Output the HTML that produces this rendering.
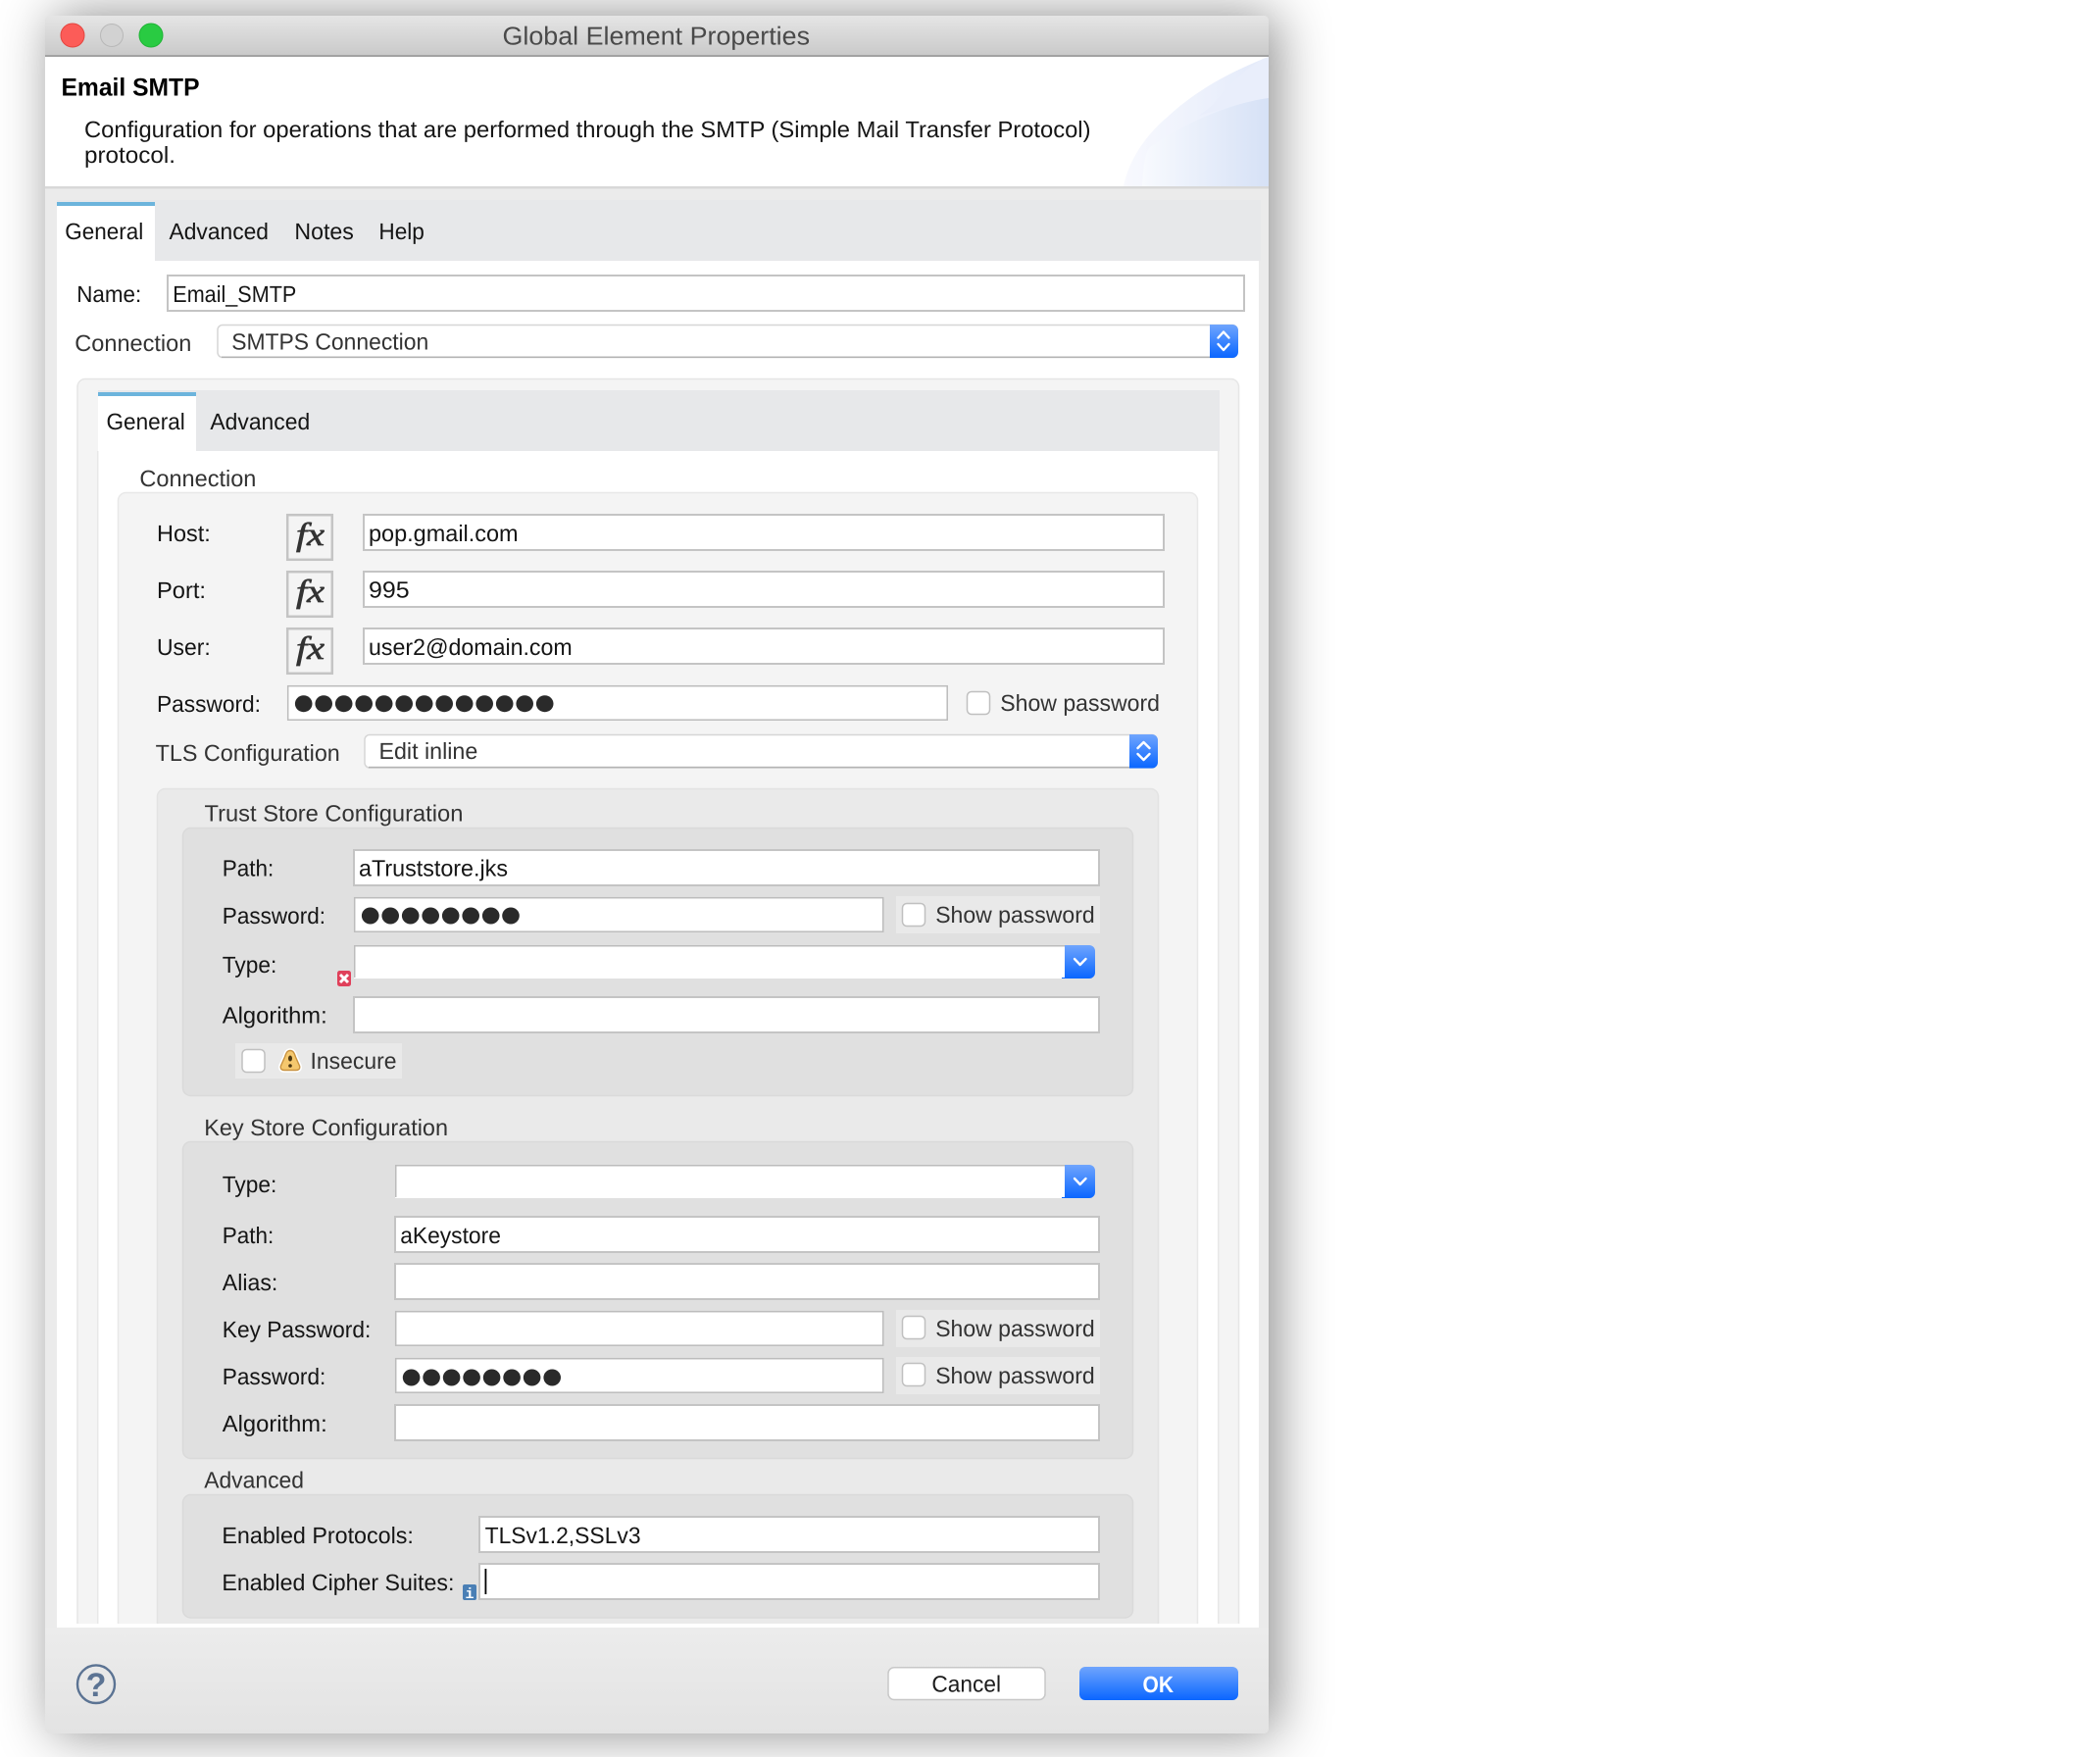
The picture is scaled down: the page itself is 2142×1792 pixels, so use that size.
<!DOCTYPE html>
<html><head><meta charset="utf-8"><title>Global Element Properties</title>
<style>
html,body{margin:0;padding:0;background:#fff;width:2142px;height:1792px;overflow:hidden}
#w{position:absolute;left:46px;top:16px;width:1248px;height:1752px;border-radius:5px;box-shadow:8px 0 54px rgba(0,0,0,.46);background:#ebebeb}
svg{position:absolute;left:0;top:0;filter:blur(.35px)}
text{font-family:"Liberation Sans",sans-serif;font-size:23.5px;fill:#151515;text-rendering:geometricPrecision}
.g{fill:#333}
.i{fill:#fff;stroke:#c4c4c4;stroke-width:2}
.t{fill:#fff;stroke:#bcbcbc;stroke-width:1.5}
.c{fill:#fff;stroke:#c0c0c0;stroke-width:1.5}
.fx{fill:none;stroke:#c4c4c4;stroke-width:2.5}
.ch{fill:none;stroke:#fff;stroke-width:2.4;stroke-linecap:round;stroke-linejoin:round}
.d{fill:#2a2a2a}
.fxt{font-family:"Liberation Serif",serif;font-style:italic;font-size:33px;fill:#333;stroke:#333;stroke-width:.7px}
</style></head><body>
<div id="w"></div>
<svg width="2142" height="1792" viewBox="0 0 2142 1792" xmlns="http://www.w3.org/2000/svg">
<defs>
<linearGradient id="tb" x1="0" y1="0" x2="0" y2="1"><stop offset="0" stop-color="#e5e5e5"/><stop offset="1" stop-color="#c9c9c9"/></linearGradient>
<linearGradient id="bt" x1="0" y1="0" x2="0" y2="1"><stop offset="0" stop-color="#6fa5fd"/><stop offset="1" stop-color="#0a66ff"/></linearGradient>
<linearGradient id="ft" x1="0" y1="0" x2="0" y2="1"><stop offset="0" stop-color="#ececec"/><stop offset="1" stop-color="#e3e3e3"/></linearGradient>
<linearGradient id="wm" x1="0" y1="0" x2="1" y2="0"><stop offset="0" stop-color="#f8f9fe"/><stop offset="1" stop-color="#e3eafa"/></linearGradient>
<linearGradient id="wm2" x1="0" y1="0" x2="1" y2="0"><stop offset="0" stop-color="#f8fafe"/><stop offset="1" stop-color="#d6e1f6"/></linearGradient>
</defs>

<!-- title bar -->
<path d="M46 57V21a5 5 0 0 1 5-5H1289a5 5 0 0 1 5 5V57Z" fill="url(#tb)"/>
<rect x="46" y="56" width="1248" height="2" fill="#a2a2a2"/>
<circle cx="74" cy="36" r="12" fill="#fc5c58" stroke="#e4453f" stroke-width="1"/>
<circle cx="114" cy="36" r="11.5" fill="#d2d2d2" stroke="#b8b8b8" stroke-width="1"/>
<circle cx="154" cy="36" r="12" fill="#29cb42" stroke="#20b436" stroke-width="1"/>
<text x="512.5" y="45.5" textLength="313.5" lengthAdjust="spacingAndGlyphs" style="font-size:26px;fill:#4a4a4a">Global Element Properties</text>

<!-- header -->
<rect x="46" y="58" width="1248" height="132" fill="#fff"/>
<path d="M1146 190C1152 160 1172 135 1190 120C1220 92 1255 73 1294 58V190Z" fill="url(#wm)"/>
<path d="M1237 107C1250 90 1268 72 1288 60L1294 58V100C1270 104 1250 110 1223 118Z" fill="#e9eefb"/>
<path d="M1165 190C1166 170 1168 155 1173 150C1205 128 1250 106 1294 100V190Z" fill="url(#wm2)"/>
<rect x="46" y="190" width="1248" height="2.5" fill="#d8d8d8"/>
<text x="62.5" y="97.5" textLength="141" lengthAdjust="spacingAndGlyphs" style="font-size:25.5px;font-weight:bold;fill:#000">Email SMTP</text>
<text x="86" y="140" textLength="1026.5" lengthAdjust="spacingAndGlyphs">Configuration for operations that are performed through the SMTP (Simple Mail Transfer Protocol)</text>
<text x="86" y="166" textLength="93" lengthAdjust="spacingAndGlyphs">protocol.</text>

<!-- outer tabs -->
<rect x="46" y="192.5" width="1248" height="1463" fill="#ebebeb"/>
<rect x="58" y="204" width="1228" height="62" fill="#e7e8ea"/>
<rect x="58" y="266" width="1226" height="1394" fill="#fff"/>
<rect x="58" y="206" width="100" height="60" fill="#fff"/>
<rect x="58" y="206" width="100" height="4" fill="#6cb4dc"/>
<text x="66.3" y="244" textLength="80" lengthAdjust="spacingAndGlyphs">General</text>
<text x="172.5" y="244" textLength="101.5" lengthAdjust="spacingAndGlyphs">Advanced</text>
<text x="300.4" y="244" textLength="60.5" lengthAdjust="spacingAndGlyphs">Notes</text>
<text x="386.4" y="244" textLength="46.5" lengthAdjust="spacingAndGlyphs">Help</text>

<text x="78.2" y="308" textLength="66" lengthAdjust="spacingAndGlyphs">Name:</text>
<rect class="i" x="171" y="281" width="1098" height="36"/>
<text x="176.3" y="308" textLength="126" lengthAdjust="spacingAndGlyphs">Email_SMTP</text>

<text class="g" x="76.3" y="358" textLength="119" lengthAdjust="spacingAndGlyphs">Connection</text>
<rect x="222" y="331.5" width="1040" height="33" rx="5" fill="#fff" stroke="#d6d6d6" stroke-width="1.5"/>
<rect x="226" y="363.5" width="1010" height="1.5" fill="#b4b4b4"/>
<path d="M1234 331H1257a6 6 0 0 1 6 6V359a6 6 0 0 1-6 6H1234Z" fill="url(#bt)"/>
<path class="ch" d="M1242.5 344.5L1248 338.5L1253.5 344.5M1242.5 351L1248 357L1253.5 351"/>
<text class="g" x="236.2" y="356.3" textLength="201" lengthAdjust="spacingAndGlyphs">SMTPS Connection</text>

<!-- nested panel -->
<rect x="79" y="386.5" width="1184.5" height="1290" rx="8" fill="#f4f4f4" stroke="#e6e6e6" stroke-width="1.5"/>
<rect x="100" y="398" width="1144" height="62" fill="#e7e8ea"/>
<rect x="100" y="460" width="1142" height="1200" fill="#fff"/>
<rect x="1242" y="460" width="1.5" height="1200" fill="#e8e8e8"/>
<rect x="99" y="460" width="1.5" height="1200" fill="#e8e8e8"/>
<rect x="100" y="400" width="100" height="60" fill="#fff"/>
<rect x="100" y="400" width="100" height="4" fill="#6cb4dc"/>
<text x="108.5" y="438" textLength="80.3" lengthAdjust="spacingAndGlyphs">General</text>
<text x="214.4" y="438" textLength="101.8" lengthAdjust="spacingAndGlyphs">Advanced</text>

<text class="g" x="142.4" y="496" textLength="119" lengthAdjust="spacingAndGlyphs">Connection</text>
<rect x="120.5" y="502.5" width="1101" height="1180" rx="8" fill="#f4f4f4" stroke="#e8e8e8" stroke-width="1.5"/>

<!-- host/port/user -->
<text x="160" y="552" textLength="54.8" lengthAdjust="spacingAndGlyphs">Host:</text>
<text x="160" y="610" textLength="50" lengthAdjust="spacingAndGlyphs">Port:</text>
<text x="160" y="668" textLength="54.8" lengthAdjust="spacingAndGlyphs">User:</text>
<rect class="fx" x="293.2" y="525.2" width="45.6" height="45.6"/>
<rect class="fx" x="293.2" y="583.2" width="45.6" height="45.6"/>
<rect class="fx" x="293.2" y="641.2" width="45.6" height="45.6"/>
<text class="fxt" x="302" y="556" textLength="29" lengthAdjust="spacingAndGlyphs">fx</text>
<text class="fxt" x="302" y="614" textLength="29" lengthAdjust="spacingAndGlyphs">fx</text>
<text class="fxt" x="302" y="672" textLength="29" lengthAdjust="spacingAndGlyphs">fx</text>
<rect class="i" x="371" y="525" width="816" height="36"/>
<rect class="i" x="371" y="583" width="816" height="36"/>
<rect class="i" x="371" y="641" width="816" height="36"/>
<text x="376" y="552" textLength="152.6" lengthAdjust="spacingAndGlyphs">pop.gmail.com</text>
<text x="376" y="609.5" textLength="41.6" lengthAdjust="spacingAndGlyphs">995</text>
<text x="376" y="668" textLength="207.7" lengthAdjust="spacingAndGlyphs">user2@domain.com</text>

<!-- password -->
<text x="160" y="726" textLength="106" lengthAdjust="spacingAndGlyphs">Password:</text>
<rect class="t" x="293.7" y="699.7" width="672.5" height="34.5"/>
<g class="d">
<ellipse cx="309.7" cy="717.7" rx="8.8" ry="8.5"/><ellipse cx="330.2" cy="717.7" rx="8.8" ry="8.5"/><ellipse cx="350.7" cy="717.7" rx="8.8" ry="8.5"/><ellipse cx="371.2" cy="717.7" rx="8.8" ry="8.5"/><ellipse cx="391.7" cy="717.7" rx="8.8" ry="8.5"/><ellipse cx="412.2" cy="717.7" rx="8.8" ry="8.5"/><ellipse cx="432.7" cy="717.7" rx="8.8" ry="8.5"/><ellipse cx="453.2" cy="717.7" rx="8.8" ry="8.5"/><ellipse cx="473.7" cy="717.7" rx="8.8" ry="8.5"/><ellipse cx="494.2" cy="717.7" rx="8.8" ry="8.5"/><ellipse cx="514.7" cy="717.7" rx="8.8" ry="8.5"/><ellipse cx="535.2" cy="717.7" rx="8.8" ry="8.5"/><ellipse cx="555.7" cy="717.7" rx="8.8" ry="8.5"/>
</g>
<rect class="c" x="986.5" y="705.5" width="23" height="23" rx="4.5"/>
<text class="g" x="1020.3" y="725" textLength="162.7" lengthAdjust="spacingAndGlyphs">Show password</text>

<!-- TLS -->
<text class="g" x="158.6" y="776" textLength="188.2" lengthAdjust="spacingAndGlyphs">TLS Configuration</text>
<rect x="372" y="749.5" width="808" height="33.5" rx="5" fill="#fff" stroke="#d6d6d6" stroke-width="1.5"/>
<rect x="376" y="781.8" width="778" height="1.5" fill="#b4b4b4"/>
<path d="M1152 749H1175a6 6 0 0 1 6 6V777.5a6 6 0 0 1-6 6H1152Z" fill="url(#bt)"/>
<path class="ch" d="M1160.5 763L1166.5 757L1172.5 763M1160.5 769L1166.5 775L1172.5 769"/>
<text class="g" x="386.5" y="774" textLength="100.8" lengthAdjust="spacingAndGlyphs">Edit inline</text>

<!-- outer TLS panel -->
<rect x="160.5" y="804.5" width="1021" height="870" rx="8" fill="#eaeaea" stroke="#e3e3e3" stroke-width="1.5"/>
<text class="g" x="208.5" y="837.5" textLength="263.9" lengthAdjust="spacingAndGlyphs">Trust Store Configuration</text>

<!-- trust panel -->
<rect x="186.5" y="844.5" width="969" height="273" rx="8" fill="#e0e0e0" stroke="#dadada" stroke-width="1.5"/>
<text x="226.8" y="893.5" textLength="52.5" lengthAdjust="spacingAndGlyphs">Path:</text>
<rect class="i" x="361" y="867" width="760" height="36"/>
<text x="366" y="893.5" textLength="152" lengthAdjust="spacingAndGlyphs">aTruststore.jks</text>

<text x="226.8" y="942" textLength="105.2" lengthAdjust="spacingAndGlyphs">Password:</text>
<rect class="t" x="361.7" y="915.7" width="539" height="34.5"/>
<g class="d">
<ellipse cx="377.7" cy="934" rx="8.8" ry="8.5"/><ellipse cx="398.2" cy="934" rx="8.8" ry="8.5"/><ellipse cx="418.7" cy="934" rx="8.8" ry="8.5"/><ellipse cx="439.2" cy="934" rx="8.8" ry="8.5"/><ellipse cx="459.7" cy="934" rx="8.8" ry="8.5"/><ellipse cx="480.2" cy="934" rx="8.8" ry="8.5"/><ellipse cx="500.7" cy="934" rx="8.8" ry="8.5"/><ellipse cx="521" cy="934" rx="8.8" ry="8.5"/>
</g>
<rect x="914" y="914" width="208" height="38" fill="#e9e9e9"/>
<rect class="c" x="920.5" y="921.5" width="23" height="23" rx="4.5"/>
<text class="g" x="954.2" y="941" textLength="162.5" lengthAdjust="spacingAndGlyphs">Show password</text>

<text x="226.8" y="992" textLength="55.5" lengthAdjust="spacingAndGlyphs">Type:</text>
<rect x="361" y="964" width="726" height="34" fill="#fff"/>
<rect x="361" y="964" width="726" height="1.5" fill="#bcbcbc"/>
<rect x="361" y="964" width="1.5" height="33" fill="#bcbcbc"/>
<path d="M1086 964H1111a6 6 0 0 1 6 6V992a6 6 0 0 1-6 6H1083V997H1086Z" fill="url(#bt)"/>
<path class="ch" d="M1096 978L1101.7 984L1107.5 978"/>
<rect x="344" y="990" width="14" height="16" rx="2.5" fill="#e0405a"/>
<path d="M347 994L355 1002M355 994L347 1002" stroke="#fff" stroke-width="3" fill="none"/>

<text x="226.8" y="1043.5" textLength="106.9" lengthAdjust="spacingAndGlyphs">Algorithm:</text>
<rect class="i" x="361" y="1017" width="760" height="36"/>

<rect x="240" y="1064" width="170" height="36" fill="#e9e9e9"/>
<rect class="c" x="247" y="1070.5" width="23" height="23" rx="4.5"/>
<path d="M296 1071C300 1071 301 1075 302 1078L306 1087C307 1091 304 1092 302 1092H290C288 1092 285 1091 286 1087L290 1078C291 1075 292 1071 296 1071Z" fill="#f5c86e" stroke="#fff" stroke-width="3.5"/>
<path d="M296 1071.5C299.5 1071.5 300.5 1075 301.5 1078L305.5 1087C306.5 1090.5 304 1091.5 302 1091.5H290C288 1091.5 285.5 1090.5 286.5 1087L290.5 1078C291.5 1075 292.5 1071.5 296 1071.5Z" fill="#f5c86e" stroke="#c9923f" stroke-width="1.4"/>
<ellipse cx="296" cy="1079.5" rx="2" ry="3" fill="#4a3510"/>
<circle cx="296" cy="1087" r="1.8" fill="#4a3510"/>
<text class="g" x="316.5" y="1090" textLength="88" lengthAdjust="spacingAndGlyphs">Insecure</text>

<!-- key store -->
<text class="g" x="208.2" y="1158" textLength="248.8" lengthAdjust="spacingAndGlyphs">Key Store Configuration</text>
<rect x="186.5" y="1164.5" width="969" height="323" rx="8" fill="#e0e0e0" stroke="#dadada" stroke-width="1.5"/>
<text x="226.8" y="1216" textLength="55.5" lengthAdjust="spacingAndGlyphs">Type:</text>
<rect x="403" y="1188" width="684" height="34" fill="#fff"/>
<rect x="403" y="1188" width="684" height="1.5" fill="#bcbcbc"/>
<rect x="403" y="1188" width="1.5" height="33" fill="#bcbcbc"/>
<path d="M1086 1188H1111a6 6 0 0 1 6 6V1216a6 6 0 0 1-6 6H1083V1221H1086Z" fill="url(#bt)"/>
<path class="ch" d="M1096 1202L1101.7 1208L1107.5 1202"/>

<text x="226.8" y="1268" textLength="52.5" lengthAdjust="spacingAndGlyphs">Path:</text>
<rect class="i" x="403" y="1241" width="718" height="36"/>
<text x="408.2" y="1268" textLength="102.7" lengthAdjust="spacingAndGlyphs">aKeystore</text>

<text x="226.8" y="1316" textLength="56.5" lengthAdjust="spacingAndGlyphs">Alias:</text>
<rect class="i" x="403" y="1289" width="718" height="36"/>

<text x="226.8" y="1364" textLength="151.5" lengthAdjust="spacingAndGlyphs">Key Password:</text>
<rect class="t" x="403.7" y="1337.7" width="497" height="34.5"/>
<rect x="914" y="1336" width="208" height="38" fill="#e9e9e9"/>
<rect class="c" x="920.5" y="1342.5" width="23" height="23" rx="4.5"/>
<text class="g" x="954.2" y="1363" textLength="162.5" lengthAdjust="spacingAndGlyphs">Show password</text>

<text x="226.8" y="1412" textLength="105.5" lengthAdjust="spacingAndGlyphs">Password:</text>
<rect class="t" x="403.7" y="1385.7" width="497" height="34.5"/>
<g class="d">
<ellipse cx="419.6" cy="1405" rx="8.8" ry="8.5"/><ellipse cx="440.1" cy="1405" rx="8.8" ry="8.5"/><ellipse cx="460.6" cy="1405" rx="8.8" ry="8.5"/><ellipse cx="481.1" cy="1405" rx="8.8" ry="8.5"/><ellipse cx="501.6" cy="1405" rx="8.8" ry="8.5"/><ellipse cx="522.1" cy="1405" rx="8.8" ry="8.5"/><ellipse cx="542.6" cy="1405" rx="8.8" ry="8.5"/><ellipse cx="563.2" cy="1405" rx="8.8" ry="8.5"/>
</g>
<rect x="914" y="1384" width="208" height="38" fill="#e9e9e9"/>
<rect class="c" x="920.5" y="1390.5" width="23" height="23" rx="4.5"/>
<text class="g" x="954.2" y="1411" textLength="162.5" lengthAdjust="spacingAndGlyphs">Show password</text>

<text x="226.8" y="1460" textLength="106.9" lengthAdjust="spacingAndGlyphs">Algorithm:</text>
<rect class="i" x="403" y="1433" width="718" height="36"/>

<!-- advanced -->
<text class="g" x="208.2" y="1517.5" textLength="101.8" lengthAdjust="spacingAndGlyphs">Advanced</text>
<rect x="186.5" y="1524.5" width="969" height="125.5" rx="8" fill="#e0e0e0" stroke="#dadada" stroke-width="1.5"/>
<text x="226.4" y="1574" textLength="195.5" lengthAdjust="spacingAndGlyphs">Enabled Protocols:</text>
<rect class="i" x="489" y="1547" width="632" height="36"/>
<text x="494.6" y="1574" textLength="159" lengthAdjust="spacingAndGlyphs">TLSv1.2,SSLv3</text>
<text x="226.4" y="1622" textLength="237" lengthAdjust="spacingAndGlyphs">Enabled Cipher Suites:</text>
<rect class="i" x="489" y="1595" width="632" height="36"/>
<rect x="494.5" y="1600" width="1.8" height="26" fill="#000"/>
<rect x="472" y="1616" width="14" height="16" rx="2" fill="#4a7fb5"/>
<text x="479" y="1630" text-anchor="middle" style="font-family:'Liberation Mono',monospace;font-weight:bold;font-size:15px;fill:#fff">i</text>

<!-- clip bottom -->
<rect x="58" y="1656" width="1226" height="4" fill="#fff"/>
<rect x="1284" y="266" width="10" height="1394" fill="#ebebeb"/>
<rect x="46" y="192.5" width="12" height="1467.5" fill="#ebebeb"/>
<path d="M46 1660V1763a5 5 0 0 0 5 5H1289a5 5 0 0 0 5-5V1660Z" fill="url(#ft)"/>

<!-- footer -->
<ellipse cx="98" cy="1717.7" rx="19" ry="19.3" fill="none" stroke="#5b7393" stroke-width="2.4"/>
<text x="98" y="1730" text-anchor="middle" style="font-size:34px;font-weight:bold;fill:#5b7393">?</text>
<rect x="906" y="1700.7" width="160" height="32.8" rx="6" fill="#fff" stroke="#c8c8c8" stroke-width="1.5"/>
<text x="950.4" y="1725.7" textLength="70.6" lengthAdjust="spacingAndGlyphs" style="fill:#1c1c1c">Cancel</text>
<rect x="1101" y="1700" width="162" height="34" rx="6" fill="url(#bt)"/>
<text x="1165.5" y="1726" textLength="31.5" lengthAdjust="spacingAndGlyphs" style="fill:#fff;font-weight:bold">OK</text>
</svg>
</body></html>
